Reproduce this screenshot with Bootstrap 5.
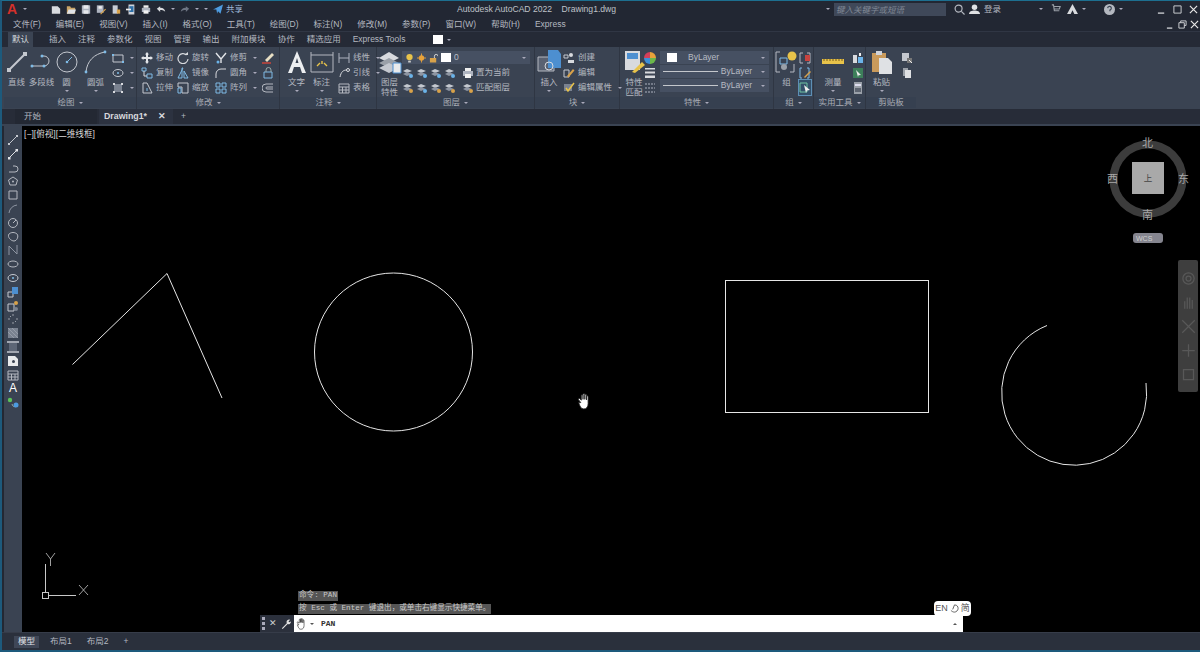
<!DOCTYPE html>
<html lang="zh-CN">
<head>
<meta charset="UTF-8">
<title>Autodesk AutoCAD 2022 - Drawing1.dwg</title>
<link rel="stylesheet" href="https://cdn.jsdelivr.net/npm/bootstrap@5.3.0/dist/css/bootstrap.min.css">
<style>
html, body { height: 652px; overflow: hidden; }
body { background: #232833; color: #b4b8c0; font-family: "Liberation Sans", "Noto Sans CJK SC", sans-serif; font-size: 8.5px; line-height: 1; }
.app { height: 652px; display: flex; flex-direction: column; border-top: 1px solid #1d6f90; border-bottom: 2px solid #1d5a7c; border-left: 2px solid #1d5a7c; }
svg { display: block; flex: none; }

.title-bar { height: 16px; background: #222733; padding: 0 0 0 5px; position: relative; }
.app-a { color: #d4302a; font-size: 14px; font-weight: 700; width: 12px; }
.caret { width: 0; height: 0; border-left: 2px solid transparent; border-right: 2px solid transparent; border-top: 2px solid #aab; flex: none; }
.qat { margin-left: 24px; gap: 5px; }
.qat svg { width: 10px; height: 11px; }
.share { color: #9fb6d8; margin-left: 3px; }
.win-title { position: absolute; left: 455px; top: 4px; font-size: 8.6px; color: #bfc2c8; word-spacing: 0; white-space: pre; }
.search { width: 112px; height: 13px; background: #3f4859; color: #7f8794; font-style: italic; padding: 3px 0 0 2px; margin-left: auto; }
.win-btns { gap: 7px; margin-left: 12px; padding-right: 2px; }

.menu-bar { height: 15px; background: #222733; padding-left: 11px; gap: 15px; border-bottom: 1px solid #303644; }
.doc-btns { margin-left: auto; gap: 3px; padding-right: 1px; }
.tab-bar { height: 15px; background: #252a36; padding-left: 6px; gap: 12px; }
.rtab { padding: 3px 0 0; height: 15px; }
.rtab-on { background: #3b4453; color: #d5d8dc; padding: 3px 4px 0; margin-right: 4px; }

.ribbon { height: 62px; background: #3a4352; padding-left: 2px; }
.rp { display: flex; flex-direction: column; border-right: 1px solid #2f3643; flex: none; }
.rp-body { display: flex; height: 50px; padding-top: 3px; }
.rp-title { height: 11px; text-align: center; color: #a9adb5; display: flex; justify-content: center; align-items: center; gap: 4px; background: #364050; }
.rp-draw { width: 133px; }
.rp-mod { width: 143px; }
.rp-ann { width: 97px; }
.rp-lay { width: 158px; }
.rp-blk { width: 85px; }
.rp-prop { width: 154px; }
.rp-grp { width: 40px; }
.rp-util { width: 52px; }
.rp-clip { flex: 1; border-right: 0; }
.big { display: flex; flex-direction: column; align-items: center; width: 25px; gap: 3px; flex: none; text-align: center; }
.big svg { width: 24px; height: 24px; }
.big span { white-space: nowrap; line-height: 10px; }
.col-s { display: flex; flex-direction: column; flex: none; }
.row-s { display: flex; align-items: center; gap: 3px; height: 15px; white-space: nowrap; }
.row-s svg { width: 12px; height: 12px; }
.row-s .caret { margin-left: 3px; }
.combo { height: 13px; margin: 1px 0; background: #465062; display: flex; align-items: center; padding: 0 4px 0 3px; gap: 3px; color: #b8bcc4; }
.combo .caret { margin-left: auto; }
.swatch { width: 10px; height: 9px; background: #fff; flex: none; }
.lw { flex: 1; height: 1px; background: #c4c7cc; }
.selbtn { outline: 1px solid #5d8fb5; background: #34506a; }

.doc-tabs { height: 17px; background: #272c38; padding-left: 13px; border-bottom: 2px solid #3a4352; }
.dtab { height: 15px; padding-top: 3px; }
.dtab-start { width: 82px; padding-left: 9px; background: #232833; }
.dtab-on { width: 74px; padding-left: 5px; margin-left: 2px; background: #2c3240; color: #d6d8dc; font-weight: 700; font-size: 8.8px; display: flex; justify-content: space-between; padding-right: 7px; }

.work { flex: 1; display: flex; min-height: 0; }
.left-tools { width: 18px; margin-left: 2px; background: #3a4352; padding-top: 8px; display: flex; flex-direction: column; align-items: center; gap: 1.8px; flex: none; }
.left-tools svg { width: 12px; height: 12px; }
.drawing { flex: 1; background: #000; position: relative; overflow: hidden; }
.drawing > .geom { position: absolute; inset: 0; }
.view-label { position: absolute; left: 2px; top: 4px; color: #d8d8d8; font-size: 8.6px; }
.compass { position: absolute; color: #a8a8a8; font-size: 11px; }
.nav-strip { position: absolute; left: 1156px; top: 134px; width: 20px; height: 132px; background: #3e3e3e; border-radius: 2px; display: flex; flex-direction: column; align-items: center; justify-content: space-around; padding: 6px 0; }
.nav-strip svg { width: 15px; height: 15px; }
.wcs { position: absolute; left: 1111px; top: 107px; width: 30px; height: 10px; background: #85858f; border-radius: 3px; font-size: 7px; color: #d0d0d0; padding: 2px 0 0 3px; }
.cube { position: absolute; left: 1110px; top: 36px; width: 32px; height: 32px; background: #a9a9a9; color: #444; }
.hist { position: absolute; left: 276px; background: #555; color: #c8c8c8; font-family: "Liberation Mono", "Noto Sans CJK SC", monospace; font-size: 7.6px; height: 10px; padding: 1px 1px 0; white-space: pre; }
.cmd { position: absolute; left: 238px; top: 489px; width: 703px; height: 17px; display: flex; background: #fff; }
.cmd-side { width: 34px; background: #2b303c; display: flex; align-items: center; gap: 4px; padding-left: 2px; color: #d0d0d0; }
.grip { width: 3px; height: 13px; border-left: 3px dotted #aab; }
.cmd-in { flex: 1; display: flex; align-items: center; gap: 3px; padding: 0 6px 0 2px; color: #333; font-family: "Liberation Mono", monospace; font-weight: 700; font-size: 8px; }
.ime { position: absolute; left: 912px; top: 475px; width: 37px; height: 15px; background: #fff; color: #555; border-radius: 4px; font-size: 9px; display: flex; align-items: center; justify-content: center; gap: 2px; z-index: 2; }

.status { height: 18px; background: #2a303c; padding-left: 12px; border-top: 1px solid #363c49; }
.st-tab { padding: 0 4px; margin-right: 7px; }
.st-on { color: #e2e4e8; background: #3f4757; height: 12px; display: flex; align-items: center; }
</style>
</head>
<body>
<svg width="0" height="0" class="position-absolute">
  <defs>
    <symbol id="doc" viewBox="0 0 12 12"><path d="M1 2h7l3 3v6H1z" fill="#d8dade"/></symbol>
    <symbol id="folder" viewBox="0 0 12 12"><path d="M1 2h4l1 2h5v7H1z" fill="#c9a468"/><path d="M1 11l2-5h9l-2 5z" fill="#dfe2e6"/></symbol>
    <symbol id="save" viewBox="0 0 12 12"><path d="M1 1h10v10H1z" fill="#aeb4c0"/><path d="M3 1h6v4H3zM3 7h6v4H3z" fill="#e6e8ec"/></symbol>
    <symbol id="saveas" viewBox="0 0 12 12"><path d="M1 1h8v9H1z" fill="#aeb4c0"/><path d="M3 2h4v3H3z" fill="#eee"/><path d="M5 11l6-6 1 1-6 6z" fill="#d8a24a"/></symbol>
    <symbol id="web" viewBox="0 0 12 12"><path d="M2 1h6v10H2z" fill="#c7ccd4"/><path d="M7 6h4v5H7z" fill="#d8a24a"/></symbol>
    <symbol id="phone" viewBox="0 0 12 12"><path d="M3 0h7v12H3z" fill="#cfd3da"/><path d="M4 2h5v7H4z" fill="#2d6fa8"/><path d="M0 5h6v2H0z" fill="#eee"/></symbol>
    <symbol id="print" viewBox="0 0 12 12"><path d="M3 1h6v3H3z" fill="#eee"/><path d="M1 4h10v5H1z" fill="#aeb4c0"/><path d="M3 7h6v4H3z" fill="#f2f2f2"/></symbol>
    <symbol id="undo" viewBox="0 0 12 12"><path d="M1 5l4-3v2c4 0 6 2 6 5-1-2-3-2.500-6-2.500V9z" fill="#d8dade"/></symbol>
    <symbol id="redo" viewBox="0 0 12 12"><path d="M11 5L7 2v2C3 4 1 6 1 9c1-2 3-2.500 6-2.500V9z" fill="#6d7482"/></symbol>
    <symbol id="plane" viewBox="0 0 12 12"><path d="M0 6l12-6-3 11-3-3-1 3-1-5z" fill="#4d9be0"/></symbol>
    <symbol id="move" viewBox="0 0 12 12"><path d="M6 0l2 2.500H7V5h2.500V4L12 6 9.500 8V7H7v2.500h1L6 12 4 9.500h1V7H2.500v1L0 6l2.500-2v1H5V2.500H4z" fill="#e2e4e8"/></symbol>
    <symbol id="rotate" viewBox="0 0 12 12"><path d="M9.500 3A5 5 0 1 0 11 7" fill="none" stroke="#d8dade" stroke-width="1.200"/><path d="M7 3h4V0z" fill="#d8dade"/></symbol>
    <symbol id="trim" viewBox="0 0 12 12"><path d="M1 1l5 6M11 1L6 7v4" fill="none" stroke="#e2e4e8" stroke-width="1.400"/><circle cx="3" cy="10" r="1.500" fill="#6bb3e8"/></symbol>
    <symbol id="copy" viewBox="0 0 12 12"><path d="M1 1h4v3H1zM6 7h5v4H6z" fill="none" stroke="#7fbbe6"/><path d="M3 4v5h3" fill="none" stroke="#d8dade"/></symbol>
    <symbol id="mirror" viewBox="0 0 12 12"><path d="M6 1L1 11h4V1zM7 4v7h4z" fill="none" stroke="#7fbbe6"/></symbol>
    <symbol id="fillet" viewBox="0 0 12 12"><path d="M1 11V7a5 5 0 0 1 5-5h5" fill="none" stroke="#d8dade"/></symbol>
    <symbol id="stretch" viewBox="0 0 12 12"><path d="M2 1h4l5 10H2z" fill="none" stroke="#c4c8cf"/><path d="M6 6v3" stroke="#7fbbe6"/></symbol>
    <symbol id="scale" viewBox="0 0 12 12"><path d="M1 1h10v10H5V5H1z" fill="none" stroke="#c4c8cf"/><path d="M1 6h3v5H1z" fill="none" stroke="#7fbbe6"/></symbol>
    <symbol id="array" viewBox="0 0 12 12"><path d="M1 1h4v4H1zM7 1h4v4H7zM1 7h4v4H1zM7 7h4v4H7z" fill="none" stroke="#7fbbe6"/></symbol>
    <symbol id="erase" viewBox="0 0 12 12"><path d="M3 8l7-7 2 2-7 7z" fill="#e8dfc4"/><path d="M0 11h9" stroke="#d4453a" stroke-width="1.400"/></symbol>
    <symbol id="join" viewBox="0 0 12 12"><path d="M2 5h8v6H2z" fill="none" stroke="#7fbbe6"/><path d="M4 5V3a2.500 2.500 0 0 1 5 0v2" fill="none" stroke="#9aa"/></symbol>
    <symbol id="offset" viewBox="0 0 12 12"><path d="M11 2H4a3.500 3.500 0 0 0 0 8h7M11 5H5a1 1 0 0 0 0 2h6" fill="none" stroke="#b4b8c0"/></symbol>
    <symbol id="rect" viewBox="0 0 12 12"><path d="M1 3h10v7H1z" fill="none" stroke="#c4c8cf"/><path d="M0 2h2v2H0zM10 9h2v2h-2z" fill="#7fbbe6"/></symbol>
    <symbol id="ell" viewBox="0 0 12 12"><ellipse cx="6" cy="6" rx="5" ry="3.500" fill="none" stroke="#c4c8cf"/><circle cx="6" cy="6" r="1" fill="#7fbbe6"/></symbol>
    <symbol id="hatch" viewBox="0 0 12 12"><path d="M2 2h8v8H2z" fill="#7a8290"/><path d="M1 1h2v2H1zM9 1h2v2H9zM1 9h2v2H1zM9 9h2v2H9z" fill="#d8dade"/></symbol>
    <symbol id="linear" viewBox="0 0 12 12"><path d="M1 1v10M11 1v10M1 6h10" fill="none" stroke="#aeb4c0"/></symbol>
    <symbol id="leader" viewBox="0 0 12 12"><path d="M2 10C3 5 5 3 9 3" fill="none" stroke="#d8dade"/><circle cx="10" cy="3" r="1.500" fill="none" stroke="#d8dade"/></symbol>
    <symbol id="table" viewBox="0 0 12 12"><path d="M1 2h10v9H1zM1 5h10M1 8h10M4.500 5v6M8 5v6" fill="none" stroke="#b4b8c0"/></symbol>
    <symbol id="lay" viewBox="0 0 12 12"><path d="M1 4l4-2 5 2-5 2z" fill="#c4c8cf"/><path d="M1 7l4-2 5 2-5 2z" fill="#8e95a2"/><circle cx="9" cy="9" r="2" fill="#6bb3e8"/></symbol>
    <symbol id="lay2" viewBox="0 0 12 12"><path d="M1 4l4-2 5 2-5 2z" fill="#c4c8cf"/><path d="M1 7l4-2 5 2-5 2z" fill="#8e95a2"/><circle cx="9" cy="9" r="2" fill="#d8a24a"/></symbol>
    <symbol id="block1" viewBox="0 0 12 12"><path d="M1 3h4v3H1z" fill="none" stroke="#c4c8cf"/><path d="M8 1a2 2 0 1 1 0 4 2 2 0 0 1 0-4zM5 8h6v3H5z" fill="#d8dade"/></symbol>
    <symbol id="block2" viewBox="0 0 12 12"><path d="M1 3h5v7H1z" fill="none" stroke="#c4c8cf"/><path d="M4 9l6-7 1.500 1.500-6 7z" fill="#d8a24a"/></symbol>
    <symbol id="block3" viewBox="0 0 12 12"><path d="M1 2h8v7H1z" fill="#7a8290"/><path d="M3 6l2 3 6-8" fill="none" stroke="#e8c34a" stroke-width="1.500"/></symbol>
    <symbol id="wheel" viewBox="0 0 12 12"><path d="M6 6V0a6 6 0 0 1 6 6z" fill="#e8a23a"/><path d="M6 6h6a6 6 0 0 1-6 6z" fill="#6cb84a"/><path d="M6 6v6a6 6 0 0 1-6-6z" fill="#3d8fd8"/><path d="M6 6H0a6 6 0 0 1 6-6z" fill="#d23f5a"/></symbol>
    <symbol id="lwt" viewBox="0 0 12 12"><path d="M1 1h10v1.500H1zM1 4.500h10V6.500H1zM1 8.500h10V11H1z" fill="#d8dade"/></symbol>
    <symbol id="ltp" viewBox="0 0 12 12"><path d="M1 2h10M1 6h10M1 10h10" stroke="#aeb4c0" stroke-dasharray="2 1"/></symbol>
    <symbol id="g1" viewBox="0 0 12 12"><path d="M1 1h3M1 1v10h3M11 1H8M11 1v10H8" fill="none" stroke="#b4b8c0"/><path d="M6 3h5v6H6z" fill="#c8433f"/></symbol>
    <symbol id="g2" viewBox="0 0 12 12"><path d="M1 1h2M1 1v10h2M10 1H8M10 1v10H8" fill="none" stroke="#7fbbe6"/><path d="M5 10l6-6 1 1-6 6z" fill="#d8a24a"/></symbol>
    <symbol id="g3" viewBox="0 0 12 12"><path d="M1 1h7v9H1z" fill="none" stroke="#6fc2a0"/><path d="M5 3l6 5-3 .5L7 11z" fill="#eee"/></symbol>
    <symbol id="u1" viewBox="0 0 12 12"><path d="M1 3h4v8H1z" fill="#d8dade"/><path d="M6 5h5v6H6z" fill="#6bb3e8"/><path d="M7 1h2v3H7z" fill="#eee"/></symbol>
    <symbol id="u2" viewBox="0 0 12 12"><path d="M1 1h10v10H1z" fill="#3d7f5a"/><path d="M4 3l5 5-2.500 .3L6 10z" fill="#eee"/></symbol>
    <symbol id="u3" viewBox="0 0 12 12"><path d="M2 0h8v12H2z" fill="#9aa0a8"/><path d="M3 2h6v2H3z" fill="#dde"/><path d="M3 6h6v4H3z" fill="#5d6470"/></symbol>
    <symbol id="c1" viewBox="0 0 12 12"><path d="M1 1h7v8H1z" fill="#c4c8cf"/><path d="M6 6h5v5H6z" fill="#777"/><path d="M8 8l3 3" stroke="#eee"/></symbol>
    <symbol id="c2" viewBox="0 0 12 12"><path d="M2 1h5v8H2z" fill="#9aa0a8"/><path d="M4 3h6v8H4z" fill="#dfe1e4"/></symbol>
    <symbol id="lt-line" viewBox="0 0 12 12"><path d="M2 10l8-8" stroke="#c4c8cf"/><path d="M1 9h2v2H1zM9 1h2v2H9z" fill="#c4c8cf"/></symbol>
    <symbol id="lt-ray" viewBox="0 0 12 12"><path d="M2 10l8-8" stroke="#e2e4e8"/><path d="M1 9h2.500v2.500H1zM8.500 1H11v2.500H8.500z" fill="#e2e4e8"/></symbol>
    <symbol id="lt-pl" viewBox="0 0 12 12"><path d="M2 10h6a3 3 0 0 0 0-6H6" fill="none" stroke="#b4b8c0"/></symbol>
    <symbol id="lt-poly" viewBox="0 0 12 12"><path d="M6 2l4.500 3-1.500 5H3L1.500 5z" fill="none" stroke="#b4b8c0"/><circle cx="6" cy="6.500" r="1" fill="#b4b8c0"/></symbol>
    <symbol id="lt-rect" viewBox="0 0 12 12"><path d="M2 2h8v8H2z" fill="none" stroke="#b4b8c0"/></symbol>
    <symbol id="lt-arc" viewBox="0 0 12 12"><path d="M2 10a9 9 0 0 1 8-8" fill="none" stroke="#8e95a2"/></symbol>
    <symbol id="lt-cir" viewBox="0 0 12 12"><circle cx="6" cy="6" r="4.500" fill="none" stroke="#b4b8c0"/><path d="M6 6l3-3" stroke="#b4b8c0"/></symbol>
    <symbol id="lt-cloud" viewBox="0 0 12 12"><path d="M2 3c2-2 6-2 8 0s0 7-3 7-7-4-5-7z" fill="none" stroke="#b4b8c0"/></symbol>
    <symbol id="lt-spl" viewBox="0 0 12 12"><path d="M2 11V2l8 8V1" fill="none" stroke="#8e95a2"/></symbol>
    <symbol id="lt-arcs" viewBox="0 0 12 12"><ellipse cx="6" cy="6" rx="5" ry="3" fill="none" stroke="#b4b8c0"/></symbol>
    <symbol id="lt-blk" viewBox="0 0 12 12"><path d="M1 6h5v5H1z" fill="none" stroke="#c4c8cf"/><path d="M5 1h6v7H5z" fill="#4d8fd0"/></symbol>
    <symbol id="lt-blk2" viewBox="0 0 12 12"><path d="M1 4h6v7H1z" fill="none" stroke="#c4c8cf"/><circle cx="9" cy="3" r="2" fill="#d8a24a"/><circle cx="9" cy="9" r="2" fill="#7a8290"/></symbol>
    <symbol id="lt-pts" viewBox="0 0 12 12"><path d="M6 1v2M6 9v2M1 6h2M9 6h2M3 3l1 1M8 8l1 1" stroke="#9aa0a8"/></symbol>
    <symbol id="lt-h" viewBox="0 0 12 12"><path d="M1 1h10v10H1z" fill="#7a8290"/><path d="M1 1l10 10M5 1l6 6M1 5l6 6" stroke="#a8aeb8" stroke-width=".6"/></symbol>
    <symbol id="lt-g" viewBox="0 0 12 12"><path d="M2 2h8v8H2z" fill="#5d6676"/><path d="M0 1h12M0 11h12" stroke="#c4c8cf" stroke-width="1.400"/></symbol>
    <symbol id="lt-reg" viewBox="0 0 12 12"><path d="M1 1h7l3 3v7H1z" fill="#e8eaec"/><circle cx="6.500" cy="6.500" r="1.500" fill="#3a4352"/></symbol>
    <symbol id="lt-dots" viewBox="0 0 12 12"><path d="M5 8a3 3 0 0 0 5 2" fill="none" stroke="#9aa"/><circle cx="3" cy="4" r="2.200" fill="#5cc25a"/><circle cx="9" cy="9" r="2.500" fill="#4d9be0"/></symbol>
    <symbol id="hand" viewBox="0 0 14 16"><path d="M3.500 9L1.500 6.500c-.8-1 .5-2 1.300-1l1.200 1.300V2.500c0-1.200 1.600-1.200 1.600 0V6V1.500c0-1.200 1.700-1.200 1.700 0V6V2c0-1.200 1.600-1.200 1.600 0v4.500V3.500c0-1.100 1.500-1.100 1.500 0V10c0 3-1.500 5-4 5-2.200 0-3.200-1-4.900-6z" fill="#fff" stroke="#222" stroke-width=".8"/></symbol>
  </defs>
</svg>

<div class="app">
  <div class="title-bar d-flex align-items-center">
    <span class="app-a">A</span><span class="caret ms-1"></span>
    <div class="qat d-flex align-items-center">
      <svg><use href="#doc"/></svg><svg><use href="#folder"/></svg><svg><use href="#save"/></svg><svg><use href="#saveas"/></svg><svg><use href="#web"/></svg><svg><use href="#phone"/></svg><svg><use href="#print"/></svg>
      <svg><use href="#undo"/></svg><span class="caret"></span><svg><use href="#redo"/></svg><span class="caret"></span><span class="caret"></span>
      <svg><use href="#plane"/></svg>
    </div>
    <span class="share">共享</span>
    <span class="win-title">Autodesk AutoCAD 2022    Drawing1.dwg</span>
    <span class="caret search-arrow" style="margin-left:auto"></span>
    <div class="search ms-1">键入关键字或短语</div>
    <svg class="ms-2" width="11" height="11" viewBox="0 0 12 12"><circle cx="5" cy="5" r="3.800" fill="none" stroke="#b4b8c0" stroke-width="1.300"/><path d="M8 8l3.500 3.500" stroke="#b4b8c0" stroke-width="1.300"/></svg>
    <svg class="ms-1" width="11" height="11" viewBox="0 0 12 12"><circle cx="6" cy="3.500" r="3" fill="#dfe1e4"/><path d="M0 11c0-3 3-4 6-4s6 1 6 4z" fill="#dfe1e4"/></svg>
    <span class="ms-1">登录</span>
    <span class="caret" style="margin-left:38px"></span>
    <svg class="ms-2" width="10" height="10" viewBox="0 0 12 12"><path d="M1 1h2l1 7h6M3.500 3H11l-1 3H4" fill="none" stroke="#9aa0a8" stroke-width="1.300"/></svg>
    <svg class="ms-1" style="margin-left:6px!important" width="11" height="10" viewBox="0 0 12 11"><path d="M6 0l6 11H8L6 7l-2 4H0z" fill="#d8dade"/></svg>
    <span class="caret ms-1"></span>
    <svg style="margin-left:18px" width="11" height="11" viewBox="0 0 12 12"><circle cx="6" cy="6" r="6" fill="#b4b8c0"/><path d="M4 4.500a2 2 0 1 1 2.500 2V8" fill="none" stroke="#3a4352" stroke-width="1.300"/></svg>
    <span class="caret ms-1"></span>
    <div class="win-btns d-flex align-items-center" style="margin-left:34px">
      <svg width="9" height="9" viewBox="0 0 10 10"><path d="M1 9h7" stroke="#d8dade" stroke-width="1.400"/></svg>
      <svg width="9" height="9" viewBox="0 0 10 10"><path d="M1 1h8v8H1z" fill="none" stroke="#d8dade"/></svg>
      <svg width="9" height="9" viewBox="0 0 10 10"><path d="M1 1l8 8M9 1l-8 8" stroke="#e8e8e8" stroke-width="1.300"/></svg>
    </div>
  </div>

  <div class="menu-bar d-flex align-items-center">
    <span>文件(F)</span><span>编辑(E)</span><span>视图(V)</span><span>插入(I)</span><span>格式(O)</span><span>工具(T)</span><span>绘图(D)</span><span>标注(N)</span><span>修改(M)</span><span>参数(P)</span><span>窗口(W)</span><span>帮助(H)</span><span>Express</span>
    <div class="doc-btns d-flex align-items-center">
      <svg width="9" height="9" viewBox="0 0 10 10"><path d="M1 9h6" stroke="#d8dade" stroke-width="1.400"/></svg>
      <svg width="9" height="9" viewBox="0 0 10 10"><path d="M3 3V1h6v5H7M1 3h6v6H1z" fill="none" stroke="#d8dade"/></svg>
      <svg width="9" height="9" viewBox="0 0 10 10"><path d="M1 1l8 8M9 1l-8 8" stroke="#e8e8e8" stroke-width="1.300"/></svg>
    </div>
  </div>

  <div class="tab-bar d-flex">
    <span class="rtab rtab-on">默认</span><span class="rtab">插入</span><span class="rtab">注释</span><span class="rtab">参数化</span><span class="rtab">视图</span><span class="rtab">管理</span><span class="rtab">输出</span><span class="rtab">附加模块</span><span class="rtab">协作</span><span class="rtab">精选应用</span><span class="rtab">Express Tools</span>
    <span class="d-flex align-items-center gap-1 ms-3"><span class="swatch"></span><span class="caret"></span></span>
  </div>

  <div class="ribbon d-flex">
    <div class="rp rp-draw">
      <div class="rp-body">
        <div class="big"><svg><use href="#lt-line"/></svg><span>直线</span></div>
        <div class="big"><svg viewBox="0 0 24 24"><path d="M2 16h12a5 5 0 0 0 0-10h-2" fill="none" stroke="#c4c8cf"/><circle cx="2" cy="16" r="1.500" fill="#7fbbe6"/><circle cx="14" cy="16" r="1.500" fill="#7fbbe6"/><circle cx="12" cy="6" r="1.500" fill="#7fbbe6"/></svg><span>多段线</span></div>
        <div class="big"><svg viewBox="0 0 24 24"><circle cx="12" cy="12" r="10" fill="none" stroke="#c4c8cf"/><path d="M12 12l5-5" stroke="#7fbbe6"/><circle cx="12" cy="12" r="1.300" fill="#7fbbe6"/></svg><span>圆</span><span class="caret"></span></div>
        <div class="big ms-1"><svg viewBox="0 0 24 24"><path d="M2 22C3 11 10 4 21 2" fill="none" stroke="#c4c8cf"/><circle cx="2" cy="22" r="1.400" fill="#7fbbe6"/><circle cx="21" cy="2" r="1.400" fill="#7fbbe6"/></svg><span>圆弧</span><span class="caret"></span></div>
        <div class="col-s ms-1">
          <div class="row-s"><svg><use href="#rect"/></svg><span class="caret"></span></div>
          <div class="row-s"><svg><use href="#ell"/></svg><span class="caret"></span></div>
          <div class="row-s"><svg><use href="#hatch"/></svg><span class="caret"></span></div>
        </div>
      </div>
      <div class="rp-title">绘图 <span class="caret"></span></div>
    </div>

    <div class="rp rp-mod">
      <div class="rp-body ps-1">
        <div class="col-s" style="width:36px">
          <div class="row-s"><svg><use href="#move"/></svg>移动</div>
          <div class="row-s"><svg><use href="#copy"/></svg>复制</div>
          <div class="row-s"><svg><use href="#stretch"/></svg>拉伸</div>
        </div>
        <div class="col-s" style="width:38px">
          <div class="row-s"><svg><use href="#rotate"/></svg>旋转</div>
          <div class="row-s"><svg><use href="#mirror"/></svg>镜像</div>
          <div class="row-s"><svg><use href="#scale"/></svg>缩放</div>
        </div>
        <div class="col-s" style="width:47px">
          <div class="row-s"><svg><use href="#trim"/></svg>修剪<span class="caret"></span></div>
          <div class="row-s"><svg><use href="#fillet"/></svg>圆角<span class="caret"></span></div>
          <div class="row-s"><svg><use href="#array"/></svg>阵列<span class="caret"></span></div>
        </div>
        <div class="col-s">
          <div class="row-s"><svg><use href="#erase"/></svg></div>
          <div class="row-s"><svg><use href="#join"/></svg></div>
          <div class="row-s"><svg><use href="#offset"/></svg></div>
        </div>
      </div>
      <div class="rp-title">修改 <span class="caret"></span></div>
    </div>

    <div class="rp rp-ann">
      <div class="rp-body ps-1">
        <div class="big"><svg viewBox="0 0 24 24"><path d="M12 1l9 22h-4l-2-6H9l-2 6H3zM10.500 13h3L12 8z" fill="#eceef0" fill-rule="evenodd"/></svg><span>文字</span><span class="caret"></span></div>
        <div class="big"><svg viewBox="0 0 24 24"><path d="M1 2v20M23 2v20M1 5h22M1 22h22" fill="none" stroke="#b4b8c0"/><path d="M7 16l3-3M17 16l-3-3M12 11v3" stroke="#e8c34a" stroke-width="1.400"/></svg><span>标注</span><span class="caret"></span></div>
        <div class="col-s ms-1">
          <div class="row-s"><svg><use href="#linear"/></svg>线性<span class="caret"></span></div>
          <div class="row-s"><svg><use href="#leader"/></svg>引线<span class="caret"></span></div>
          <div class="row-s"><svg><use href="#table"/></svg>表格</div>
        </div>
      </div>
      <div class="rp-title">注释 <span class="caret"></span></div>
    </div>

    <div class="rp rp-lay">
      <div class="rp-body">
        <div class="big"><svg viewBox="0 0 24 24"><path d="M1 8l10-6 10 6-10 5z" fill="#d8dade"/><path d="M1 13l10-5 10 5-10 5z" fill="#9aa0a8"/><path d="M1 18l10-5 10 5-10 5z" fill="#c4c8cf"/><path d="M15 13h8v10h-8z" fill="#e8eaec" stroke="#4d8fd0"/></svg><span style="line-height:10px">图层<br>特性</span></div>
        <div class="flex-grow-1 pe-1">
          <div class="combo">
            <svg width="9" height="10" viewBox="0 0 10 10"><circle cx="5" cy="4" r="3.500" fill="#e8c34a"/><path d="M3.500 8h3v2h-3z" fill="#ccc"/></svg>
            <svg width="9" height="10" viewBox="0 0 10 10"><circle cx="5" cy="5" r="3" fill="#e8a23a"/><path d="M5 0v10M0 5h10" stroke="#e8a23a"/></svg>
            <svg width="9" height="10" viewBox="0 0 10 10"><path d="M1 5h7v5H1z" fill="#d8a24a"/><path d="M6 5V3a2 2 0 0 1 4 0" fill="none" stroke="#ddd"/></svg>
            <span class="swatch"></span><span>0</span><span class="caret"></span>
          </div>
          <div class="row-s" style="gap:2px">
            <svg><use href="#lay"/></svg><svg><use href="#lay"/></svg><svg><use href="#lay"/></svg><svg><use href="#lay"/></svg><svg class="ms-1"><use href="#print"/></svg><span>置为当前</span>
          </div>
          <div class="row-s" style="gap:2px">
            <svg><use href="#lay2"/></svg><svg><use href="#lay"/></svg><svg><use href="#lay2"/></svg><svg><use href="#lay2"/></svg><svg class="ms-1"><use href="#lay2"/></svg><span>匹配图层</span>
          </div>
        </div>
      </div>
      <div class="rp-title">图层 <span class="caret"></span></div>
    </div>

    <div class="rp rp-blk">
      <div class="rp-body ps-1">
        <div class="big" style="width:20px"><svg viewBox="0 0 24 24"><path d="M1 7h16v14H1z" fill="#5a6272" stroke="#b4b8c0"/><path d="M11 0h10l3 4v14H11z" fill="#4d8fd0"/><circle cx="12" cy="16" r="4" fill="none" stroke="#d8dade"/></svg><span>插入</span><span class="caret"></span></div>
        <div class="col-s ms-1">
          <div class="row-s"><svg><use href="#block1"/></svg>创建</div>
          <div class="row-s"><svg><use href="#block2"/></svg>编辑</div>
          <div class="row-s"><svg><use href="#block3"/></svg>编辑属性<span class="caret"></span></div>
        </div>
      </div>
      <div class="rp-title">块 <span class="caret"></span></div>
    </div>

    <div class="rp rp-prop">
      <div class="rp-body ps-1">
        <div class="big" style="width:20px"><svg viewBox="0 0 24 24"><path d="M3 1h15v19H3z" fill="#d8dade"/><path d="M5 3h11v6H5z" fill="#4d8fd0"/><path d="M10 22l10-10 3 3-10 8z" fill="#e8c34a"/></svg><span style="line-height:10px">特性<br>匹配</span></div>
        <div class="col-s">
          <div class="row-s"><svg><use href="#wheel"/></svg></div>
          <div class="row-s"><svg><use href="#lwt"/></svg></div>
          <div class="row-s"><svg><use href="#ltp"/></svg></div>
        </div>
        <div class="flex-grow-1 ms-1 me-1">
          <div class="combo"><span class="swatch ms-1"></span><span class="ms-2">ByLayer</span><span class="caret"></span></div>
          <div class="combo"><span class="lw"></span><span>ByLayer</span><span class="caret" style="margin-left:6px"></span></div>
          <div class="combo"><span class="lw"></span><span>ByLayer</span><span class="caret" style="margin-left:6px"></span></div>
        </div>
      </div>
      <div class="rp-title">特性 <span class="caret"></span></div>
    </div>

    <div class="rp rp-grp">
      <div class="rp-body">
        <div class="big"><svg viewBox="0 0 24 24"><path d="M5 2H1v20h4M18 2h0M19 22h-4M19 22v-8" fill="none" stroke="#b4b8c0"/><path d="M5 8h7v6H5z" fill="none" stroke="#7fbbe6"/><circle cx="9" cy="17" r="3" fill="#9aa0a8"/><circle cx="17" cy="6" r="4.500" fill="#e8c34a"/></svg><span>组</span></div>
        <div class="col-s">
          <div class="row-s"><svg><use href="#g1"/></svg></div>
          <div class="row-s"><svg><use href="#g2"/></svg></div>
          <div class="row-s selbtn"><svg><use href="#g3"/></svg></div>
        </div>
      </div>
      <div class="rp-title">组 <span class="caret"></span></div>
    </div>

    <div class="rp rp-util">
      <div class="rp-body ps-1">
        <div class="big" style="width:30px"><svg viewBox="0 0 24 24"><path d="M1 9h22v5H1z" fill="#e8c34a"/><path d="M3 9v2M6 9v2M9 9v2M12 9v2M15 9v2M18 9v2M21 9v2" stroke="#7a5f1a"/></svg><span>测量</span><span class="caret"></span></div>
        <div class="col-s ms-1">
          <div class="row-s"><svg><use href="#u1"/></svg></div>
          <div class="row-s"><svg><use href="#u2"/></svg></div>
          <div class="row-s"><svg><use href="#u3"/></svg></div>
        </div>
      </div>
      <div class="rp-title">实用工具 <span class="caret"></span></div>
    </div>

    <div class="rp rp-clip">
      <div class="rp-body ps-1">
        <div class="big" style="width:23px"><svg viewBox="0 0 24 24"><path d="M2 3h14v19H2z" fill="#c99a5b"/><path d="M6 1h6v4H6z" fill="#cfd3da"/><path d="M9 8h9l4 4v12H9z" fill="#dfe1e4"/></svg><span>粘贴</span><span class="caret"></span></div>
        <div class="col-s ms-2">
          <div class="row-s"><svg><use href="#c1"/></svg></div>
          <div class="row-s"><svg><use href="#c2"/></svg></div>
        </div>
      </div>
      <div class="rp-title" style="width:50px">剪贴板</div>
    </div>
  </div>

  <div class="doc-tabs d-flex">
    <div class="dtab dtab-start">开始</div>
    <div class="dtab dtab-on"><span>Drawing1*</span><span>✕</span></div>
    <span class="dtab ms-2">+</span>
  </div>

  <div class="work">
    <div class="left-tools">
      <svg><use href="#lt-line"/></svg><svg><use href="#lt-ray"/></svg><svg><use href="#lt-pl"/></svg><svg><use href="#lt-poly"/></svg><svg><use href="#lt-rect"/></svg><svg><use href="#lt-arc"/></svg><svg><use href="#lt-cir"/></svg><svg><use href="#lt-cloud"/></svg><svg><use href="#lt-spl"/></svg><svg><use href="#lt-arcs"/></svg><svg><use href="#ell"/></svg><svg><use href="#lt-blk"/></svg><svg><use href="#lt-blk2"/></svg><svg><use href="#lt-pts"/></svg><svg><use href="#lt-h"/></svg><svg><use href="#lt-g"/></svg><svg><use href="#lt-reg"/></svg><svg><use href="#table"/></svg>
      <span class="text-white" style="font-size:12px;height:12px">A</span>
      <svg><use href="#lt-dots"/></svg>
    </div>

    <div class="drawing">
      <svg class="geom" width="1178" height="506" viewBox="22 125 1178 506">
        <g fill="none" stroke="#e6e6e6" stroke-width="1">
          <path d="M72.500 363.500L167 272.500L222 397"/>
          <circle cx="393.500" cy="351" r="79"/>
          <rect x="725.500" y="279.500" width="203" height="132"/>
          <path d="M1047 324.500A72.500 72.500 0 1 0 1146 382"/>
        </g>
        <circle cx="1148" cy="178" r="34.500" fill="none" stroke="#3c3c3c" stroke-width="8"/>
        <g fill="none" stroke="#c8c8c8">
          <path d="M45.500 592V563M48 594.500H76"/>
          <rect x="42.500" y="591.500" width="6" height="6"/>
          <path d="M79 584l9 10M88 584l-9 10M46 552l4.500 6M55 552l-4.500 6V565" stroke-width=".8"/>
        </g>
      </svg>
      <div class="view-label">[−][俯视][二维线框]</div>
      <div class="compass" style="left:1120px;top:12px">北</div>
      <div class="compass" style="left:1120px;top:84px">南</div>
      <div class="compass" style="left:1085px;top:48px">西</div>
      <div class="compass" style="left:1156px;top:48px">东</div>
      <div class="cube d-flex align-items-center justify-content-center">上</div>
      <div class="wcs">WCS</div>
      <div class="nav-strip">
        <svg viewBox="0 0 12 12"><circle cx="6" cy="6" r="4.500" fill="none" stroke="#585858"/><circle cx="6" cy="6" r="2" fill="none" stroke="#585858"/></svg>
        <svg viewBox="0 0 12 12"><path d="M3 11V5M5 11V2M7 11V2M9 11V4" stroke="#585858"/></svg>
        <svg viewBox="0 0 12 12"><path d="M1 1l10 10M11 1L1 11" stroke="#585858"/></svg>
        <svg viewBox="0 0 12 12"><path d="M6 1v10M1 6h10" stroke="#585858"/></svg>
        <svg viewBox="0 0 12 12"><path d="M2 2h8v8H2z" fill="none" stroke="#585858"/></svg>
      </div>
      <svg class="position-absolute" style="left:555px;top:267px" width="15" height="17" viewBox="0 0 14 16"><use href="#hand"/></svg>
      <div class="hist" style="top:465px">命令: PAN</div>
      <div class="hist" style="top:478px">按 Esc 或 Enter 键退出，或单击右键显示快捷菜单。</div>
      <div class="ime">EN <svg width="9" height="9" viewBox="0 0 10 10"><path d="M5 1c3 0 4 2 4 4s-2 4-4 4-3-1-4-2M5 1L3 6" fill="none" stroke="#555"/></svg> 简</div>
      <div class="cmd">
        <div class="cmd-side"><span class="grip"></span><span>✕</span><svg width="10" height="10" viewBox="0 0 12 12"><path d="M1 11l6-6a3 3 0 0 1 4-4L9 3l1 1 2-1a3 3 0 0 1-4 3l-6 6z" fill="#e0e0e0"/></svg></div>
        <div class="cmd-in">
          <svg width="11" height="12" viewBox="0 0 14 16"><use href="#hand"/></svg><span class="caret" style="border-top-color:#555"></span><span class="ms-1">PAN</span>
          <span class="caret ms-auto" style="border-top:0;border-bottom:2px solid #555"></span>
        </div>
      </div>
    </div>
  </div>

  <div class="status d-flex align-items-center">
    <span class="st-tab st-on">模型</span><span class="st-tab">布局1</span><span class="st-tab">布局2</span><span class="st-tab">+</span>
  </div>
</div>
<script src="https://cdn.jsdelivr.net/npm/bootstrap@5.3.0/dist/js/bootstrap.bundle.min.js"></script>
</body>
</html>
